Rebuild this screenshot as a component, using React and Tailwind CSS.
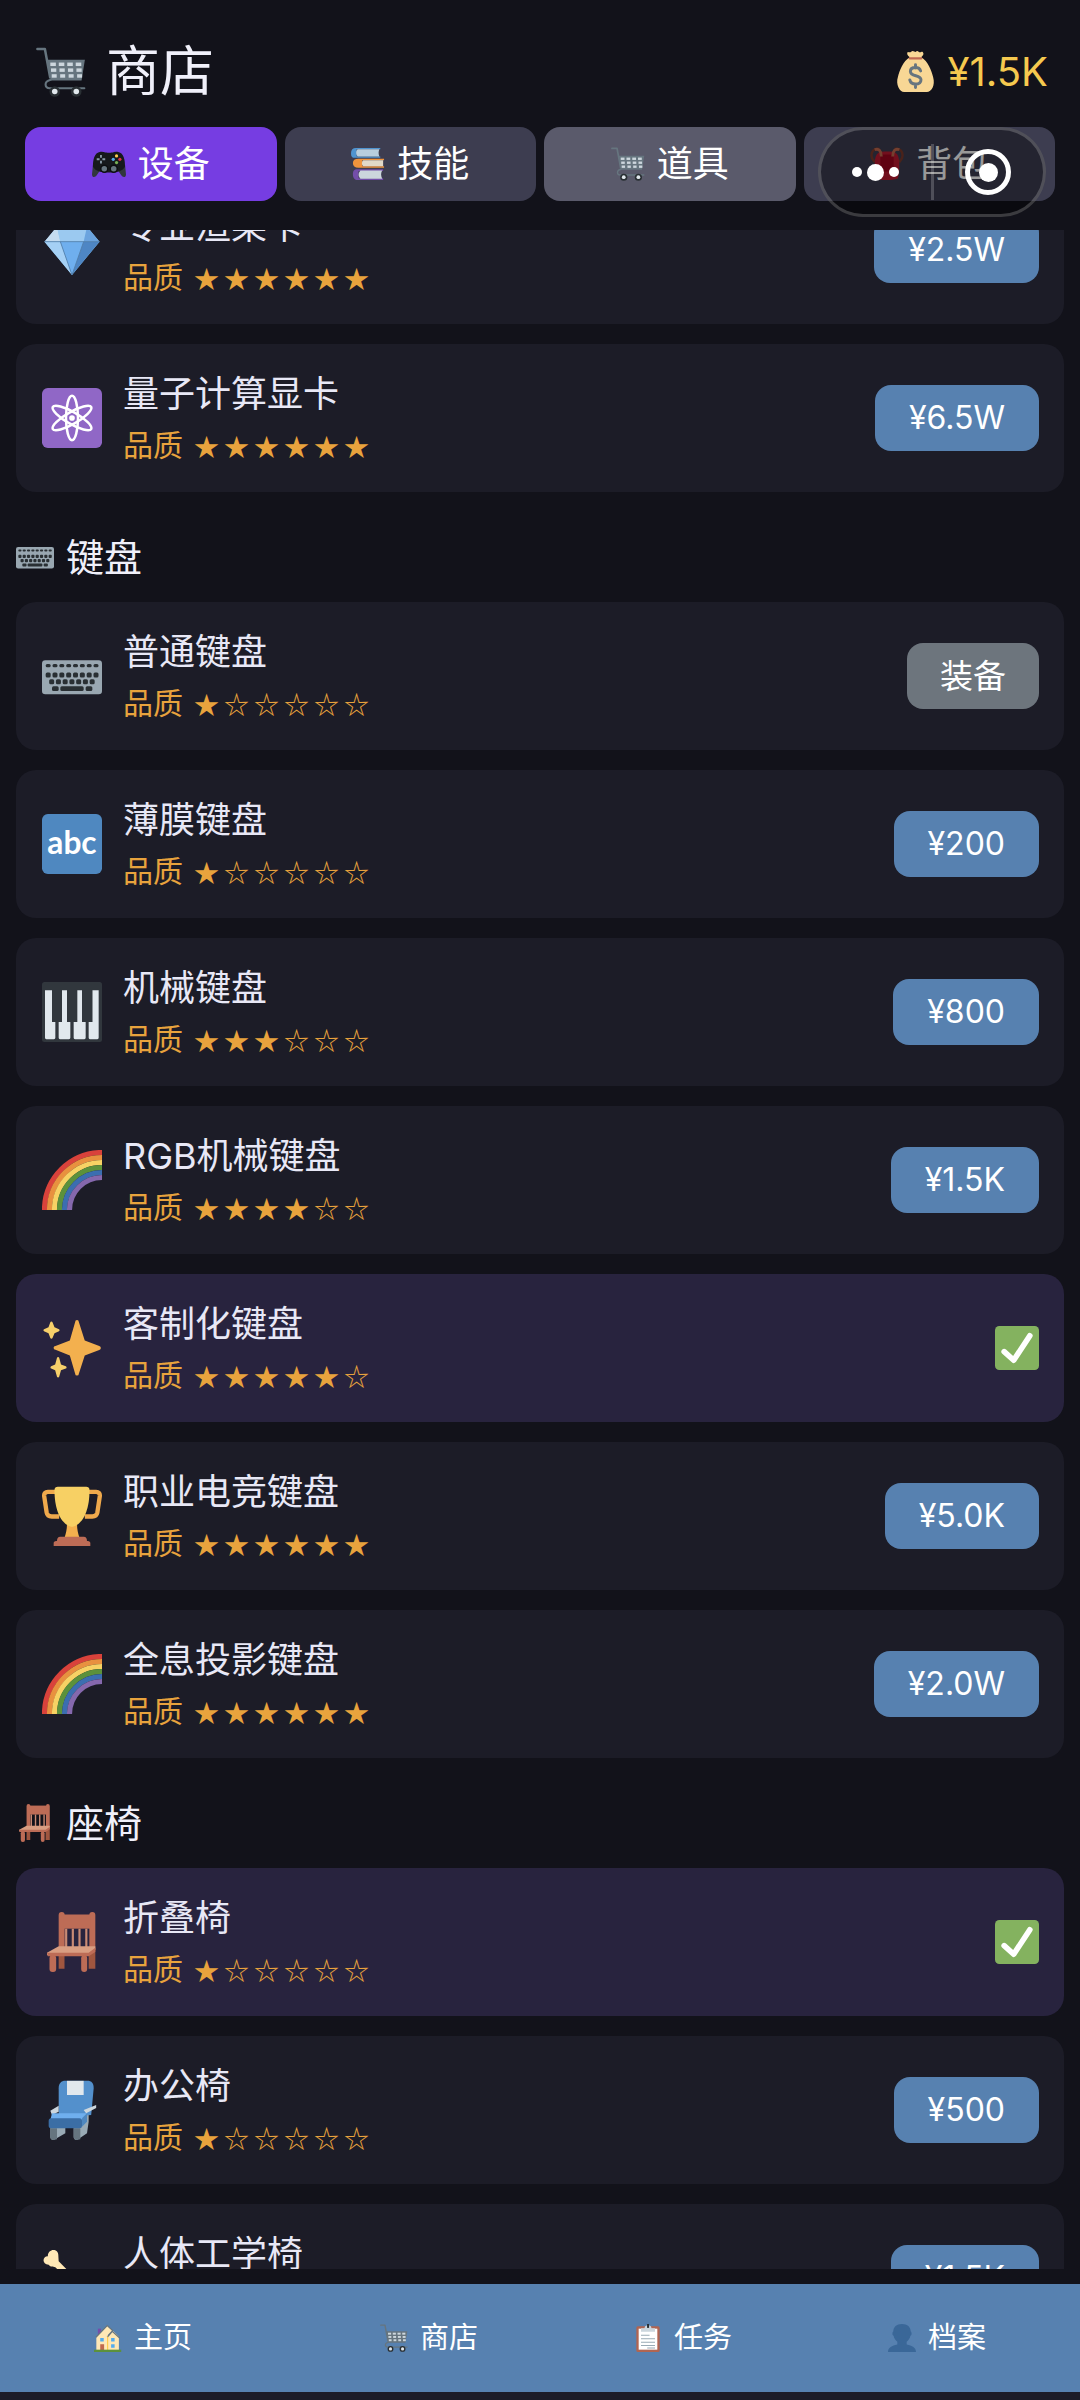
import { useState } from "react";
import clsx from "clsx";

const Svg = ({ className, children }) => (
  <svg viewBox="0 0 36 36" className={clsx("shrink-0", className)} aria-hidden="true">
    {children}
  </svg>
);

const range = (n) => Array.from({ length: n }, (_, i) => i);

function Cart({ className }) {
  return (
    <Svg className={className}>
      <path d="M1 1.500h5.400l3.800 20.500" fill="none" stroke="#66757f" strokeWidth="1.800" strokeLinejoin="round" strokeLinecap="round" />
      <path d="M8.200 9.200h27l-2.400 15H10.800z" fill="#66757f" />
      {range(3).map((r) =>
        range(4).map((c) => (
          <rect key={`${r}${c}`} x={10.3 + c * 6.1 + r * 0.5} y={11.2 + r * 4.2} width={4 - r * 0.2} height="2.500" fill="#ccd6dd" />
        ))
      )}
      <path d="M10.600 23.600c-2.600.6-3.800 2-3.700 3.600.1 1.500 1.200 2.500 2.900 2.500h25" fill="none" stroke="#66757f" strokeWidth="1.500" strokeLinecap="round" />
      <circle cx="13.500" cy="32" r="3.800" fill="#292f33" />
      <circle cx="29" cy="32" r="3.800" fill="#292f33" />
      <circle cx="13.500" cy="32" r="2" fill="#e1e8ed" />
      <circle cx="29" cy="32" r="2" fill="#e1e8ed" />
    </Svg>
  );
}

function Gamepad({ className }) {
  return (
    <Svg className={className}>
      <path d="M1 19 0 29c0 3 3 4 5 1l4-6h18l4 6c2 3 5 2 5-1l-1-10z" fill="#31373d" />
      <path d="M35 21c0-7-1-15-8-16-3-.4-4 1-9 1S12 4.600 9 5C2 6 1 14 1 21c3 5 9 6 12 6h10c3 0 9-1 12-6z" fill="#16191c" />
      <circle cx="13" cy="23" r="4.400" fill="#0c0e10" />
      <circle cx="23" cy="23" r="4.400" fill="#0c0e10" />
      <circle cx="13" cy="23" r="2.900" fill="#66757f" />
      <circle cx="23" cy="23" r="2.900" fill="#66757f" />
      <path d="M9.500 8.500v3m0 3v3M5 13h3m3 0h3" stroke="#8899a6" strokeWidth="2" />
      <circle cx="26" cy="9.500" r="1.700" fill="#ffcc4d" />
      <circle cx="29.500" cy="13" r="1.700" fill="#dd2e44" />
      <circle cx="26" cy="16.500" r="1.700" fill="#77b255" />
      <circle cx="22.500" cy="13" r="1.700" fill="#55acee" />
    </Svg>
  );
}

function Books({ className }) {
  return (
    <Svg className={className}>
      <path d="M34 23.500H7c-4 0-5 2-5 5.500s2 6 5 6h27v-2H8v-7.500h26z" fill="#744eaa" />
      <path d="M10 25h23c-1.500 3-1.500 5 0 8.500H10c-2.500-2-2.500-6 0-8.500z" fill="#ccd6dd" />
      <path d="M35 12.500H8c-4 0-6 1.500-6 4.500s2 5 6 5h27v-1.500H12v-6.500h23z" fill="#f0943c" />
      <path d="M13 14h21v6.500H13c-2-1.500-2-5 0-6.500z" fill="#e1d9c8" />
      <path d="M31 1H5C2 1 0 3 0 6.500s1 5 4 5h27V10H6V2.500h25z" fill="#4f94d0" />
      <path d="M7 2.500h23c-1 2.500-1 5 0 7.500H7c-2-2-2-6 0-7.500z" fill="#b8cede" />
    </Svg>
  );
}

function MoneyBag({ className }) {
  return (
    <Svg className={className}>
      <path d="M23 5.500c2-2 2.500-3 1.500-4.500-1-.8-1.500.2-2.500.2S20.500 0 19.500 0 18.500.8 18 .8 16.500 0 15.500 0s-1.500 1.200-2.500 1.200S11.500.4 11 1c-.8 1.500 0 3 2 4.500C7 9 4 17 2.500 23 .5 29 4 36 8 36h20c4 0 7.500-6 5.500-13C32 17 29 9 23 5.500z" fill="#f8d795" />
      <rect x="12" y="5.500" width="12" height="2" rx="1" fill="#bf6952" />
      <path d="M22.500 17.500c-.6-2-2.200-3-4.500-3-2.800 0-4.500 1.400-4.500 3.500 0 5 9.300 2.400 9.300 7.200 0 2.300-1.900 3.800-4.800 3.800s-4.500-1.300-5-3.600M18 12v3M18 29v3" fill="none" stroke="#67757f" strokeWidth="2.600" strokeLinecap="round" />
    </Svg>
  );
}

function Backpack({ className }) {
  return (
    <Svg className={className}>
      <path d="M10 2C4 1 1.500 5 1.500 9c0 3 1.500 5 3.500 7M26 2c6-1 8.500 3 8.500 7 0 3-1.500 5-3.500 7" fill="none" stroke="#7a3a2c" strokeWidth="2.600" />
      <path d="M9 6c3-1.500 15-1.500 18 0 3 2 4 6 4 12 0 6 0 11-1.500 15-2 2.500-21 2.500-23 0C5 29 5 24 5 18 5 12 6 8 9 6z" fill="#be1931" />
      <path d="M11 8h14v18H11z" fill="#a0041e" />
      <path d="M5 3c4-2 7 1 7 7M31 3c-4-2-7 1-7 7" fill="none" stroke="#c1694f" strokeWidth="3" />
    </Svg>
  );
}

function Gem({ className }) {
  return (
    <Svg className={className}>
      <path d="M1.500 13 9 4h18l7.500 9L18 33z" fill="#8ccaf7" />
      <path d="M1.500 13 9 4l2 9z" fill="#c5dcf0" />
      <path d="M11 13 9 4h18l-2 9z" fill="#9bc9f0" />
      <path d="M27 4l7.500 9H25z" fill="#6ba3de" />
      <path d="M1.500 13H11l7 20z" fill="#a5d0f5" />
      <path d="M11 13h14l-7 20z" fill="#6fafee" />
      <path d="M25 13h9.500L18 33z" fill="#4e86c4" />
      <path d="M1.500 13h33M11 13l7 20 7-20" fill="none" stroke="#4f7ba6" strokeWidth=".5" />
    </Svg>
  );
}

function Atom({ className }) {
  return (
    <Svg className={className}>
      <rect width="36" height="36" rx="3.500" fill="#9067c6" />
      <g fill="none" stroke="#fff" strokeWidth="1.500">
        <ellipse cx="18" cy="18" rx="3.600" ry="13.300" />
        <ellipse cx="18" cy="18" rx="3.600" ry="13.300" transform="rotate(60 18 18)" />
        <ellipse cx="18" cy="18" rx="3.600" ry="13.300" transform="rotate(-60 18 18)" />
      </g>
      <circle cx="18" cy="18" r="1.700" fill="#fff" />
    </Svg>
  );
}

function Keyboard({ className }) {
  return (
    <Svg className={className}>
      <rect y="8.500" width="36" height="20.500" rx="2" fill="#99a7b1" />
      <g fill="#292f33">
        {range(8).map((i) => (
          <rect key={`a${i}`} x={2.2 + i * 4.1} y="10.800" width="3" height="2" rx=".9" />
        ))}
        {range(8).map((i) => (
          <rect key={`b${i}`} x={2.2 + i * 4.1} y="15.900" width="3" height="3" rx=".9" />
        ))}
        {range(7).map((i) => (
          <rect key={`c${i}`} x={4.3 + i * 4.05} y="20" width="3" height="3" rx=".9" />
        ))}
        <rect x="6" y="24.200" width="4" height="2.800" rx=".9" />
        <rect x="11" y="24.200" width="14" height="2.800" rx=".9" />
        <rect x="26.200" y="24.200" width="4" height="2.800" rx=".9" />
      </g>
    </Svg>
  );
}

function Abc({ className }) {
  return (
    <Svg className={className}>
      <rect width="36" height="36" rx="3.500" fill="#4f88c0" />
      <text x="18" y="24" textAnchor="middle" fontSize="19" fontWeight="700" fill="#fff" className="font-[Lato,sans-serif]">
        abc
      </text>
    </Svg>
  );
}

function Piano({ className }) {
  return (
    <Svg className={className}>
      <rect width="36" height="36" rx="1.500" fill="#31373d" />
      <g fill="#e1e8ed">
        <path d="M2 5h4v19h2v9.500q0 .8-.8.8H2.600q-.8 0-.8-.8V5z" />
        <path d="M12 5h3v19h2v9.500q0 .8-.8.8h-5.400q-.8 0-.8-.8V24h2z" />
        <path d="M21.200 5h2.800v19h2.200v9.500q0 .8-.8.8h-5.600q-.8 0-.8-.8V24h2.200z" />
        <path d="M30.300 5H34v28.500q0 .8-.8.8h-4.400q-.8 0-.8-.8V24h2.300z" />
      </g>
    </Svg>
  );
}

const RAINBOW = ["#d9423b", "#e8913f", "#f7d264", "#5c913b", "#3b6eb0", "#8568ad"];

function Rainbow({ className }) {
  return (
    <Svg className={className}>
      {RAINBOW.map((color, i) => (
        <path
          key={color}
          d={`M${1.5 + i * 3} 36A${34.5 - i * 3} ${34.5 - i * 3} 0 0 1 36 ${1.5 + i * 3}`}
          fill="none"
          stroke={color}
          strokeWidth="3.100"
        />
      ))}
    </Svg>
  );
}

function Sparkles({ className }) {
  return (
    <Svg className={className}>
      <path d="m34.350 16.800-8.700-3.250-3.550-11.200a1.100 1.100 0 0 0-2.200 0l-3.200 11.200-8.600 3.200a1.100 1.100 0 0 0 0 2.300l8.600 3.500 3.200 10.900a1.100 1.100 0 0 0 2.200 0l3.550-10.900 8.700-3.400a1.200 1.200 0 0 0 0-2.350z" fill="#f3b04e" />
      <path d="m14.300 29-2.900-1.100-1.100-4a.7.700 0 0 0-1.300 0l-1.100 4L5.500 29a.7.700 0 0 0 0 1.300l2.400 1.100L9 35.200a.7.700 0 0 0 1.300 0l1.100-3.800 2.900-1.100a.7.700 0 0 0 0-1.300zM10.200 6.700 7.500 5.500 6.300 2.500a.7.700 0 0 0-1.300 0L3.900 5.500 1.200 6.700a.7.700 0 0 0 0 1.200l2.700 1.200L5 12a.7.700 0 0 0 1.300 0l1.200-2.900 2.700-1.200a.7.700 0 0 0 0-1.200z" fill="#f7d06a" />
    </Svg>
  );
}

function Trophy({ className }) {
  return (
    <Svg className={className}>
      <path d="M8 3.500H3.500c-1.500 0-2.300 1-2.200 2.500l1.500 10c.3 1.600 1.500 2.300 3 2.300h4.500M28 3.500h4.500c1.500 0 2.300 1 2.200 2.500l-1.500 10c-.3 1.600-1.500 2.300-3 2.300h-4.500" fill="none" stroke="#efa94c" strokeWidth="2.600" />
      <path d="M15 22h6c0 4 .5 6 1.500 9h-9c1-3 1.500-5 1.500-9z" fill="#f3b04e" />
      <path d="M7.500 2.500C7.500 1 8.300.5 9.500.5h17c1.200 0 2 .5 2 2C28.500 12 26 22 18.500 24.500h-1C10 22 7.500 12 7.500 2.500z" fill="#f7d064" />
      <path d="M11 30.500h14c1.500 0 2 1 2 2.500h.5c1 0 1.500.6 1.500 1.300V36H7v-1.700c0-.7.500-1.300 1.500-1.300H9c0-1.500.5-2.500 2-2.500z" fill="#bd6c56" />
    </Svg>
  );
}

function Chair({ className }) {
  return (
    <Svg className={className}>
      <path d="M10 23h3.500v11h-3.500zM28 22h4v12h-4z" fill="#a0563f" />
      <rect x="10" width="3.600" height="22" rx="1.800" fill="#bd6c56" />
      <rect x="28.400" width="3.600" height="24" rx="1.800" fill="#bd6c56" />
      <path d="M13 1.500h16v8.500H13z" fill="#bd6c56" />
      <path d="M14.500 10v11M18.500 10v11M22.500 10v11M26.600 10v11" stroke="#c98a74" strokeWidth="1.300" />
      <path d="m10 20.500-7 4v1.500h25l4-3.500v-2z" fill="#d99e82" />
      <path d="M3 24.500h25l4-3V24l-4 2.500H3.500z" fill="#bd6c56" />
      <rect x="4.500" y="26" width="4" height="10" rx="1.800" fill="#bd6c56" />
      <rect x="23.500" y="26" width="3.600" height="10" rx="1.800" fill="#bd6c56" />
    </Svg>
  );
}

function Seat({ className }) {
  return (
    <Svg className={className}>
      <path d="M5 27h9v5l-7 4c-1.500 0-2-1-2-2zM19 28l3-8 6-2v7l-1 7-6 4c-1.500 0-2-1-2-2z" fill="#99aab5" />
      <path d="M5 29h4v6.500L7 36c-1.500 0-2-1-2-2zM19 29h4v6.500l-2 .5c-1.500 0-2-1-2-2z" fill="#66757f" />
      <path d="M10 5c0-3 1.500-4.500 4-4.500h13C30 .5 31 2 31 5l-1.500 16-19.500 2z" fill="#5390cc" />
      <path d="M15 .5h10V9H15z" fill="#e1e8ed" />
      <path d="m5 18.500 5-3v3.500l-4 2zM25 18l7.500-3v1.800L26.500 20z" fill="#ccd6dd" />
      <path d="M6 20h21v4H5z" fill="#6fafee" />
      <rect x="4" y="23" width="20" height="6" rx="1.500" fill="#3b6ea5" />
      <path d="M24 23l3-3v5l-3 3z" fill="#4f88c0" />
    </Svg>
  );
}

function Bone({ className }) {
  return (
    <Svg className={className}>
      <path d="M4 10C0 10 0 5 3.500 5 3.500 0 10 0 9.800 4.500L10 8l18 18c4-1 7 1 6 4.500-1 2-3 2-3.500 2C30 36 24.500 36.500 24.500 32c0-1 .5-2 .5-3L8 11.500c-1.500-.5-3 0-4-1.500z" fill="#ffe8b6" />
    </Svg>
  );
}

function Check({ className }) {
  return (
    <Svg className={className}>
      <rect width="36" height="36" rx="3.500" fill="#84b25f" />
      <path d="m7.500 21 7.800 7L28.500 8" fill="none" stroke="#fff" strokeWidth="4.600" strokeLinecap="round" strokeLinejoin="round" />
    </Svg>
  );
}

function House({ className }) {
  return (
    <Svg className={className}>
      <path d="M5 6h4v9H5z" fill="#744eaa" />
      <path d="M3 16 17 2l15 14v18H3z" fill="#ffe8b6" />
      <path d="M2.500 17 17 2l7 6.500L18 15M17 17l6.500-7.500L33 18" fill="none" stroke="#66757f" strokeWidth="1.600" />
      <path d="M17.500 16v18" stroke="#ffcc4d" strokeWidth="1.500" />
      <path d="M8 18h4.500v4.500H8zM22 18h4.500v4.500H22zM22 26h4.500v4.500H22z" fill="#55acee" />
      <path d="M8 26h5v8H8z" fill="#c1694f" />
      <path d="M0 33h35v3H0z" fill="#5c913b" />
    </Svg>
  );
}

function Clipboard({ className }) {
  return (
    <Svg className={className}>
      <rect x="3" y="3" width="30" height="33" rx="2" fill="#b06552" />
      <path d="M6 6h24v27H6z" fill="#fff" />
      <path d="M9 5.500h4.500C14 2.500 15 2 18 2s4 .5 4.500 3.500H27V10H9z" fill="#ccd6dd" />
      <path d="M16.800 0h2.600v5h-2.600z" fill="#292f33" />
      <path d="M9 14.500h11M9 19h18M9 23.500h18M9 27.500h18M17 31h10" stroke="#99aab5" strokeWidth="1.300" />
    </Svg>
  );
}

function Silhouette({ className }) {
  return (
    <Svg className={className}>
      <path d="M24 26.500v-3.800c2.400-1.800 4.400-4.700 4.800-7.700 1-.1 1.500-1.300 1.500-2.600s-.5-2-1.100-2.600C29.200 4 25 0 18 0S6.800 4 6.800 9.800c-.6.600-1.100 1.300-1.100 2.600s.5 2.500 1.500 2.600c.4 3 2.400 5.900 4.800 7.700v3.800C5 28 0 30.500 0 36h36c0-5.500-5-8-12-9.500z" fill="#3a6798" />
    </Svg>
  );
}

const tabs = [
  { label: "设备", Icon: Gamepad, color: "bg-[#3d3d50]" },
  { label: "技能", Icon: Books, color: "bg-[#3d3d50]" },
  { label: "道具", Icon: Cart, color: "bg-[#5a5a6b]" },
  { label: "背包", Icon: Backpack, color: "bg-[#3d3d50]" },
];

const sections = [
  {
    items: [
      { name: "专业渲染卡", Icon: Gem, stars: 6, price: "¥2.5W" },
      { name: "量子计算显卡", Icon: Atom, stars: 6, price: "¥6.5W" },
    ],
  },
  {
    title: "键盘",
    Icon: Keyboard,
    items: [
      { name: "普通键盘", Icon: Keyboard, stars: 1, owned: true },
      { name: "薄膜键盘", Icon: Abc, stars: 1, price: "¥200" },
      { name: "机械键盘", Icon: Piano, stars: 3, price: "¥800" },
      { name: "RGB机械键盘", Icon: Rainbow, stars: 4, price: "¥1.5K" },
      { name: "客制化键盘", Icon: Sparkles, stars: 5, equipped: true },
      { name: "职业电竞键盘", Icon: Trophy, stars: 6, price: "¥5.0K" },
      { name: "全息投影键盘", Icon: Rainbow, stars: 6, price: "¥2.0W" },
    ],
  },
  {
    title: "座椅",
    Icon: Chair,
    items: [
      { name: "折叠椅", Icon: Chair, stars: 1, equipped: true },
      { name: "办公椅", Icon: Seat, stars: 1, price: "¥500" },
      { name: "人体工学椅", Icon: Bone, stars: 2, price: "¥1.5K" },
    ],
  },
];

const navItems = [
  { label: "主页", Icon: House },
  { label: "商店", Icon: Cart },
  { label: "任务", Icon: Clipboard },
  { label: "档案", Icon: Silhouette },
];

function Stars({ count }) {
  return (
    <span className="flex gap-[5px] font-['Noto_Sans_CJK_SC',sans-serif] text-[25px]">
      {range(6).map((i) => (
        <span key={i}>{i < count ? "★" : "☆"}</span>
      ))}
    </span>
  );
}

function ItemCard({ item }) {
  const { name, Icon, stars, price, owned, equipped } = item;
  return (
    <li
      className={clsx(
        "flex h-[148px] items-center gap-[21px] rounded-[20px] pr-[25px] pl-[26px]",
        equipped ? "bg-[#28233e]" : "bg-[#1c1c27]"
      )}
    >
      <Icon className="size-[60px]" />
      <div className="min-w-0 flex-1">
        <h3 className="text-[36px] leading-[54px] text-[#e8e8f6]">{name}</h3>
        <p className="flex items-center gap-[11px] text-[30px] leading-[48px] text-[#e8a33d]">
          品质
          <Stars count={stars} />
        </p>
      </div>
      {equipped ? (
        <Check className="size-[44px]" />
      ) : (
        <button
          className={clsx(
            "h-[66px] rounded-2xl leading-[64px] text-white",
            owned ? "bg-[#6d757d] px-[33px] text-[33px]" : "bg-[#5781b0] px-[34px] text-[32px]"
          )}
        >
          {owned ? "装备" : price}
        </button>
      )}
    </li>
  );
}

// Mini-program menu that floats over the page
function Capsule() {
  return (
    <div className="absolute top-[127px] right-[34px] flex h-[90px] w-[228px] items-center rounded-full border-3 border-white/20 bg-black/40">
      <button aria-label="更多" className="flex flex-1 items-center justify-center gap-[5px]">
        <span className="size-[10px] rounded-full bg-white" />
        <span className="size-[17px] rounded-full bg-white" />
        <span className="size-[10px] rounded-full bg-white" />
      </button>
      <span className="h-[56px] w-[3px] bg-white/20" />
      <button aria-label="关闭" className="flex flex-1 items-center justify-center">
        <span className="flex size-[46px] items-center justify-center rounded-full border-5 border-white">
          <span className="size-[19px] rounded-full bg-white" />
        </span>
      </button>
    </div>
  );
}

export default function App() {
  const [active, setActive] = useState("设备");

  return (
    <div className="relative flex h-screen flex-col bg-[#12121a] font-[Inter,'Noto_Sans_CJK_SC',sans-serif]">
      <header className="flex h-[127px] items-center justify-between pt-4 pr-8 pl-9">
        <h1 className="flex items-center gap-5 text-[54px] leading-[80px] text-[#f0f0fa]">
          <Cart className="size-[50px]" />
          商店
        </h1>
        <p className="flex items-center gap-3 text-[40px] leading-[60px] text-[#f5c94f]">
          <MoneyBag className="size-[41px]" />
          ¥1.5K
        </p>
      </header>

      <div className="grid grid-cols-4 gap-2 px-[25px]">
        {tabs.map(({ label, Icon, color }) => (
          <button
            key={label}
            onClick={() => setActive(label)}
            className={clsx(
              "flex h-[74px] items-center justify-center gap-3 rounded-2xl text-[36px] text-white",
              active === label ? "bg-[#763de2]" : color
            )}
          >
            <Icon className="size-[34px]" />
            {label}
          </button>
        ))}
      </div>

      <main className="mt-[29px] mb-[15px] min-h-0 flex-1 overflow-hidden px-4">
        <div className="-mt-[54px]">
          {sections.map(({ title, Icon, items }, i) => (
            <section key={i}>
              {title && (
                <h2 className="flex items-center gap-3 pt-[38px] pb-[18px] text-[38px] leading-[54px] text-[#f0f0fa]">
                  <Icon className="size-[38px]" />
                  {title}
                </h2>
              )}
              <ul className="flex flex-col gap-5">
                {items.map((item) => (
                  <ItemCard key={item.name} item={item} />
                ))}
              </ul>
            </section>
          ))}
        </div>
      </main>

      <nav className="flex h-[116px] border-b-8 border-[#1c1c28] bg-[#5781b0] px-4">
        {navItems.map(({ label, Icon }) => (
          <button
            key={label}
            className="flex flex-1 items-center justify-center gap-3 text-[29px] text-white first:mr-8"
          >
            <Icon className="size-[28px]" />
            {label}
          </button>
        ))}
      </nav>

      <Capsule />
    </div>
  );
}
